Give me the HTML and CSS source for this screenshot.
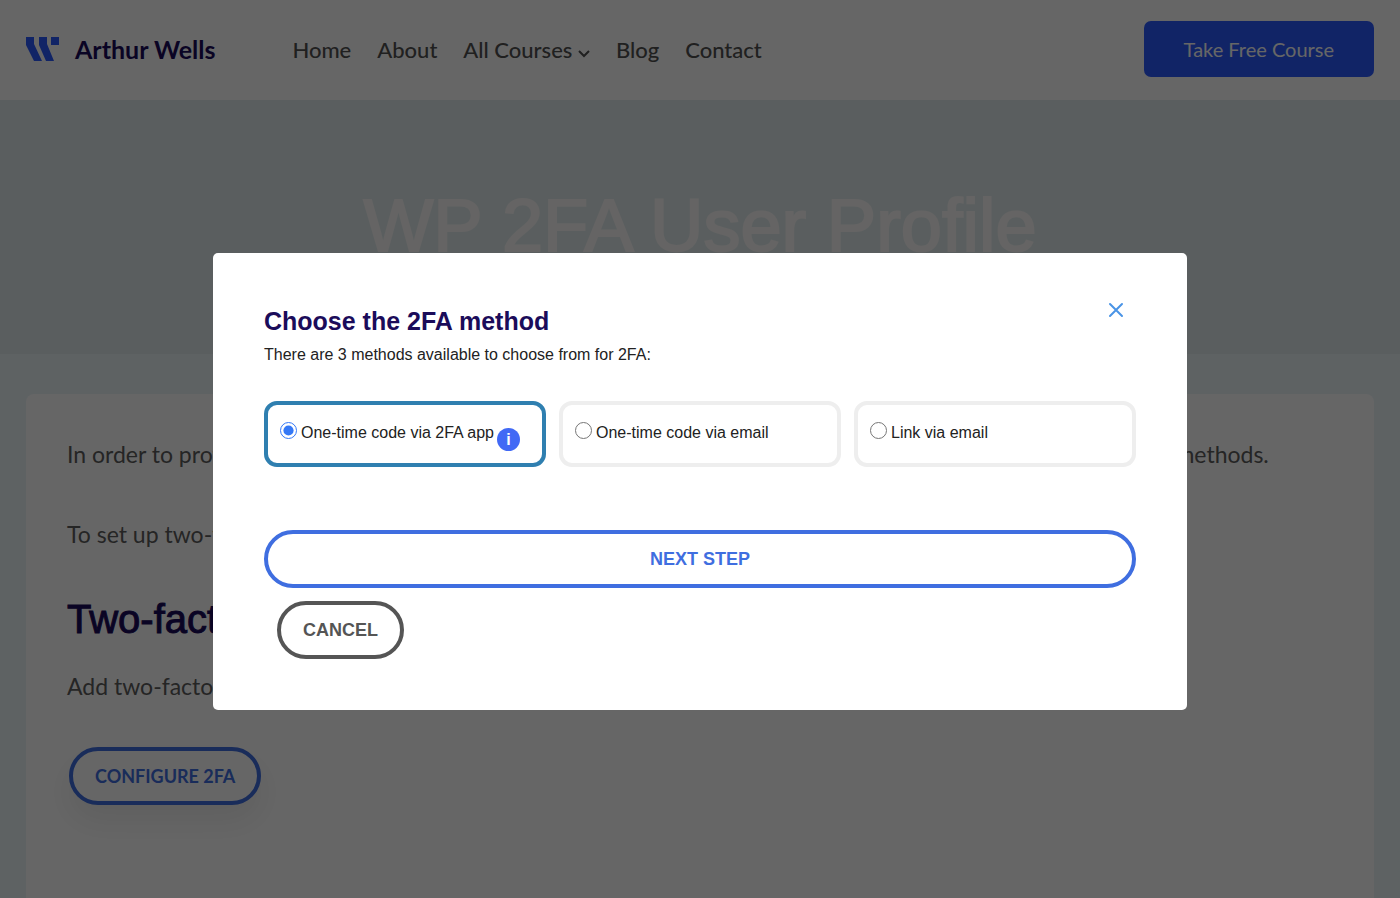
FILE: index.html
```html
<!DOCTYPE html>
<html lang="en">
<head>
<meta charset="utf-8">
<meta name="viewport" content="width=device-width, initial-scale=1">
<title>WP 2FA User Profile</title>
<link rel="stylesheet" href="styles.css">
</head>
<body>
<header class="site-header">
  <a class="brand" href="#">
    <svg class="brand-mark" viewBox="0 0 34 24" aria-hidden="true"><path d="M0 0h8v7l8 17H8L0 8zM13 0h8v7l7 17h-8L13 8zM25 0h8v8h-8z"/></svg>
    <span class="brand-name">Arthur Wells</span>
  </a>
  <nav class="main-nav">
    <a href="#">Home</a>
    <a href="#">About</a>
    <a href="#">All Courses <svg class="chevron" viewBox="0 0 12 8" aria-hidden="true"><path d="M1 1l5 5 5-5"/></svg></a>
    <a href="#">Blog</a>
    <a href="#">Contact</a>
  </nav>
  <a class="cta" href="#">Take Free Course</a>
</header>
<section class="hero">
  <h1>WP 2FA User Profile</h1>
</section>
<main class="content">
  <article class="card">
    <p>In order to protect your account, set up two-factor authentication on this page, using any one of available 2FA methods.</p>
    <p>To set up two-factor authentication, click below.</p>
    <h2>Two-factor settings</h2>
    <p>Add two-factor authentication to your account.</p>
    <button class="pill pill-configure" type="button">CONFIGURE 2FA</button>
  </article>
</main>
<div class="overlay">
  <form class="modal" role="dialog" aria-modal="true" aria-labelledby="modal-title">
    <div class="modal-head">
      <div>
        <h3 id="modal-title">Choose the 2FA method</h3>
        <p>There are 3 methods available to choose from for 2FA:</p>
      </div>
      <button class="close" type="button" aria-label="Close">
        <svg viewBox="2 2 12 12" aria-hidden="true"><path d="M2 2l12 12M14 2L2 14"/></svg>
      </button>
    </div>
    <div class="methods">
      <label class="method"><input type="radio" name="method" checked><span class="method-name">One-time code via 2FA app<span class="info">i</span></span></label>
      <label class="method"><input type="radio" name="method"><span class="method-name">One-time code via email</span></label>
      <label class="method"><input type="radio" name="method"><span class="method-name">Link via email</span></label>
    </div>
    <div class="actions">
      <button class="pill pill-next" type="button">NEXT STEP</button>
      <button class="pill pill-cancel" type="button">CANCEL</button>
    </div>
  </form>
</div>
</body>
</html>
```
FILE: styles.css
```css
* {
  box-sizing: border-box;
}

body {
  margin: 0;
  min-height: 100vh;
  display: flex;
  flex-direction: column;
  background: #ebf5f8;
  color: #5c5c5c;
  font-family: Lato, "Liberation Sans", sans-serif;
}

h1, h2, h3, p {
  margin: 0;
}

a {
  color: inherit;
  text-decoration: none;
}

.site-header {
  display: flex;
  flex: none;
  align-items: center;
  padding: 21px 26px 23px;
  background: #fff;
}

.brand {
  display: flex;
  align-items: center;
  gap: 15px;
  color: #1b0c5a;
}

.brand-mark {
  width: 34px;
  height: 24px;
  fill: #2b5aff;
}

.brand-name {
  font-size: 25px;
  font-weight: 700;
}

.main-nav {
  display: flex;
  gap: 26px;
  margin-left: 77px;
  color: #505050;
  font-size: 22px;
  font-weight: 500;
}

.chevron {
  width: 12px;
  height: 8px;
  fill: none;
  stroke: currentColor;
  stroke-width: 2;
}

.cta {
  margin-left: auto;
  padding: 0 40px;
  border-radius: 7px;
  background: #2b5aff;
  color: #fff;
  font-size: 20px;
  line-height: 56px;
}

.hero {
  flex: none;
  padding: 84px 16px 86px;
  background: #e1eced;
  text-align: center;
}

.hero h1 {
  color: #fcfafa;
  font: 400 74px/84px "Liberation Sans", Arial, sans-serif;
  -webkit-text-stroke: 2px #fcfafa;
}

.content {
  display: flex;
  flex: 1;
  padding: 40px 26px 0;
}

.card {
  flex: 1;
  padding: 41px;
  border-radius: 8px 8px 0 0;
  background: #fff;
}

.card p {
  margin-bottom: 42px;
  font-size: 23px;
  line-height: 38px;
}

.card h2 {
  margin-bottom: 24px;
  color: #1b0c5a;
  font: 400 40px/48px "Liberation Sans", Arial, sans-serif;
  -webkit-text-stroke: 1px #1b0c5a;
}

.pill {
  height: 58px;
  padding: 0 22px;
  border: 4px solid #3f6ee0;
  border-radius: 29px;
  background: #fff;
  color: #3f6ee0;
  font: 700 18px "Liberation Sans", Arial, sans-serif;
}

.pill-configure {
  margin-left: 2px;
  box-shadow: 0 16px 30px rgba(0, 0, 0, 0.07);
  font-family: Lato, sans-serif;
}

.overlay {
  position: fixed;
  inset: 0;
  display: flex;
  align-items: flex-start;
  justify-content: center;
  padding: 253px 16px 16px;
  background: rgba(0, 0, 0, 0.6);
}

.modal {
  width: 100%;
  max-width: 974px;
  padding: 51px;
  border-radius: 5px;
  background: #fff;
  color: #222;
  font: 16px/22px "Liberation Sans", Arial, sans-serif;
}

.modal-head {
  display: flex;
  align-items: flex-start;
  justify-content: space-between;
  margin-bottom: 35px;
}

.modal h3 {
  margin-bottom: 6px;
  color: #1b0c5a;
  font-size: 25px;
  line-height: 34px;
}

.close {
  width: 40px;
  padding: 0;
  border: 0;
  background: none;
}

.close svg {
  display: block;
  width: 12px;
  height: 12px;
  margin: 0 auto;
  overflow: visible;
  fill: none;
  stroke: #4a94e6;
  stroke-linecap: round;
  stroke-width: 2;
}

.methods {
  display: grid;
  grid-template-columns: repeat(3, 1fr);
  gap: 13px;
  margin-bottom: 63px;
}

.method {
  display: flex;
  align-items: flex-start;
  gap: 4px;
  min-height: 66px;
  padding: 17px 12px;
  border: 4px solid #eee;
  border-radius: 13px;
}

.method:has(input:checked) {
  border-color: #2f7fb0;
}

.method input {
  flex: none;
  width: 17px;
  height: 17px;
  margin: 0;
  accent-color: #3478f6;
}

.method-name {
  position: relative;
}

.info {
  position: absolute;
  top: 6px;
  right: -26px;
  width: 23px;
  height: 23px;
  border-radius: 50%;
  background: #4169f5;
  color: #fff;
  font-size: 16px;
  font-weight: 700;
  line-height: 23px;
  text-align: center;
}

.actions {
  display: grid;
  gap: 13px;
}

.pill-cancel {
  justify-self: start;
  margin-left: 13px;
  border-color: #555;
  color: #555;
}
```
